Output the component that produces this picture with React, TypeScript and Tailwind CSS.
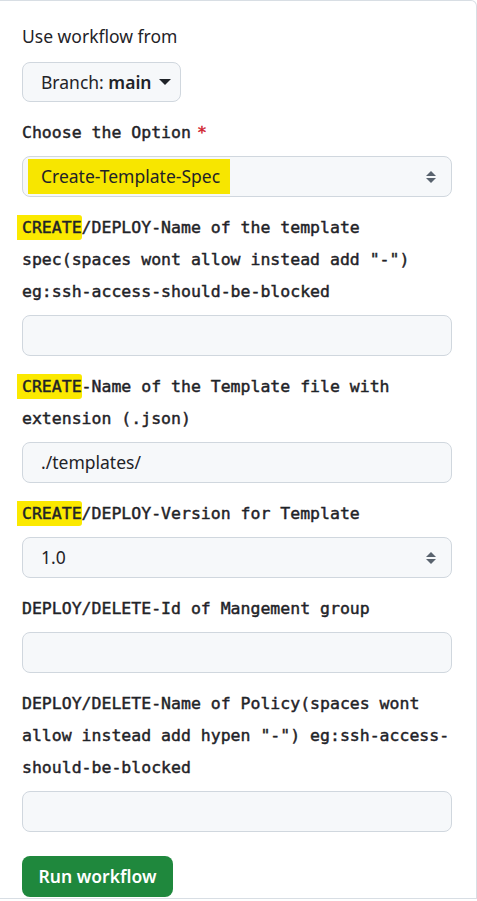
import React from "react";

const mono = "font-['DejaVu_Sans_Mono','Liberation_Mono',monospace]";
const sans = "font-['Noto_Sans','Liberation_Sans',sans-serif]";

function Mark({ children }: { children: React.ReactNode }) {
  return (
    <span className="bg-[#fbe900] rounded-r-[3px] py-[3px] shadow-[-5px_0_0_#fbe900]">
      {children}
    </span>
  );
}

function Label({ children, required }: { children: React.ReactNode; required?: boolean }) {
  return (
    <p className={`${mono} text-[16.5px] font-normal leading-[32px] text-[#1f2328] [-webkit-text-stroke:0.45px_#1f2328]`}>
      {children}
      {required && <span className="text-[#d1242f] ml-[6px] [-webkit-text-stroke:0.45px_#d1242f]">*</span>}
    </p>
  );
}

function SelectArrows() {
  return (
    <svg width="12" height="16" viewBox="0 0 12 16" className="text-[#59636e]">
      <path d="M1 7 L6 2 L11 7 Z" fill="currentColor" />
      <path d="M1 9 L6 14 L11 9 Z" fill="currentColor" />
    </svg>
  );
}

function Select({ value, mark }: { value: string; mark?: boolean }) {
  return (
    <div className="mt-[7px] h-[41px] w-[430px] rounded-[8px] border border-[#d0d7de] bg-[#f6f8fa] flex items-center justify-between pr-[14px]">
      {mark ? (
        <span className={`${sans} text-[17.5px] text-[#1f2328] bg-[#f7e600] ml-[5px] h-[35px] pl-[13px] pr-[10px] flex items-center`}>
          {value}
        </span>
      ) : (
        <span className={`${sans} text-[17.5px] text-[#1f2328] pl-[18px]`}>{value}</span>
      )}
      <SelectArrows />
    </div>
  );
}

function Input({ value }: { value?: string }) {
  return (
    <div className={`${sans} mt-[7px] h-[41px] w-[430px] rounded-[8px] border border-[#d0d7de] bg-[#f6f8fa] flex items-center pl-[18px] text-[17.5px] text-[#1f2328]`}>
      {value}
    </div>
  );
}

export default function App() {
  return (
    <div className="w-[477px] h-[901px] bg-white">
      <div className="h-[899px] border-t border-r border-b border-[#d8dee4] rounded-tr-[6px] px-[22px] pt-[23px]">
        <p className={`${sans} text-[17.5px] leading-[24px] text-[#1f2328]`}>Use workflow from</p>
        <button className={`${sans} mt-[14px] h-[40px] w-[159px] rounded-[8px] border border-[#d0d7de] bg-[#f6f8fa] flex items-center pl-[18px] gap-[7px] text-[17.5px] text-[#1f2328]`}>
          <span>
            Branch: <span className="font-semibold">main</span>
          </span>
          <svg width="12" height="8" viewBox="0 0 12 8">
            <path d="M0 1 L12 1 L6 7 Z" fill="#1f2328" />
          </svg>
        </button>

        <div className="mt-[15px]">
          <Label required>Choose the Option</Label>
          <Select value="Create-Template-Spec" mark />
        </div>

        <div className="mt-[15px]">
          <Label>
            <Mark>CREATE</Mark>/DEPLOY-Name of the template spec(spaces wont allow instead add "-") eg:ssh-access-should-be-blocked
          </Label>
          <Input />
        </div>

        <div className="mt-[15px]">
          <Label>
            <Mark>CREATE</Mark>-Name of the Template file with extension (.json)
          </Label>
          <Input value="./templates/" />
        </div>

        <div className="mt-[15px]">
          <Label>
            <Mark>CREATE</Mark>/DEPLOY-Version for Template
          </Label>
          <Select value="1.0" />
        </div>

        <div className="mt-[15px]">
          <Label>DEPLOY/DELETE-Id of Mangement group</Label>
          <Input />
        </div>

        <div className="mt-[15px]">
          <Label>
            DEPLOY/DELETE-Name of Policy(spaces wont allow instead add hypen "-") eg:ssh-access-should-be-blocked
          </Label>
          <Input />
        </div>

        <button className={`${sans} mt-[24px] h-[41px] w-[151px] rounded-[8px] bg-[#1f883d] text-white text-[17.5px] font-semibold flex items-center justify-center`}>
          Run workflow
        </button>
      </div>
    </div>
  );
}
